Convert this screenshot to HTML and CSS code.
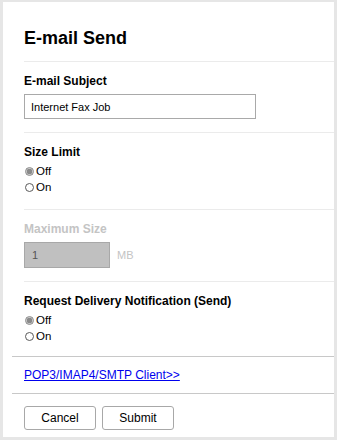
FILE: index.html
```html
<!DOCTYPE html>
<html>
<head>
<meta charset="utf-8">
<link rel="stylesheet" href="styles.css">
</head>
<body>
<div class="panel">
  <h1 class="title">E-mail Send</h1>
  <div class="section">
    <div class="label">E-mail Subject</div>
    <input class="text-input" type="text" value="Internet Fax Job">
  </div>
  <div class="section radios">
    <div class="label">Size Limit</div>
    <label class="radio-row"><span class="radio checked"></span>Off</label>
    <label class="radio-row"><span class="radio"></span>On</label>
  </div>
  <div class="section">
    <div class="label disabled">Maximum Size</div>
    <div class="size-row">
      <input class="size-input" type="text" value="1" disabled>
      <span class="unit">MB</span>
    </div>
  </div>
  <div class="section radios last">
    <div class="label">Request Delivery Notification (Send)</div>
    <label class="radio-row"><span class="radio checked"></span>Off</label>
    <label class="radio-row"><span class="radio"></span>On</label>
  </div>
  <div class="link-section">
    <a class="link" href="#">POP3/IMAP4/SMTP Client&gt;&gt;</a>
  </div>
  <div class="buttons">
    <button class="btn">Cancel</button>
    <button class="btn">Submit</button>
  </div>
</div>
</body>
</html>
```
FILE: styles.css
```css
html, body {
  margin: 0;
  padding: 0;
}
body {
  background: #e6e6e6;
  font-family: "Liberation Sans", Arial, sans-serif;
  color: #000;
  padding: 2px 3px 3px 3px;
}
.panel {
  background: #fff;
  height: 435px;
  box-sizing: border-box;
}
.title {
  margin: 0 0 0 21px;
  padding: 26px 0 12px 0;
  font-size: 18px;
  line-height: 21px;
  font-weight: bold;
  border-bottom: 1px solid #ebebeb;
}
.section {
  margin-left: 21px;
  padding: 12px 0 13px 0;
  border-bottom: 1px solid #ebebeb;
}
.section.radios {
  padding-bottom: 14px;
}
.section.last {
  border-bottom: none;
  padding-bottom: 12px;
}
.label {
  font-size: 12px;
  line-height: 14px;
  font-weight: bold;
}
.label.disabled {
  color: #c4c4c4;
}
.text-input {
  display: block;
  margin: 6px 0 0 0;
  box-sizing: border-box;
  width: 232px;
  height: 25px;
  border: 1px solid #a9a9a9;
  padding: 0 6px;
  font-family: "Liberation Sans", Arial, sans-serif;
  font-size: 11px;
  color: #000;
  outline: none;
}
.radio-row {
  display: flex;
  align-items: center;
  height: 16px;
  font-size: 11.5px;
  gap: 2px;
}
.radio-row:first-of-type {
  margin-top: 4px;
}
.radio {
  display: inline-block;
  box-sizing: border-box;
  width: 9px;
  height: 9px;
  margin-left: 1px;
  border: 1px solid #5a5a5a;
  border-radius: 50%;
  background: #fff;
  margin-top: 1px;
}
.radio.checked {
  border-color: #8a8a8a;
  background: radial-gradient(circle, #8a8a8a 0 2.6px, #d4d4d4 3.1px);
}
.size-row {
  display: flex;
  align-items: center;
  gap: 7px;
  margin-top: 6px;
}
.size-input {
  box-sizing: border-box;
  width: 86px;
  height: 26px;
  border: 1px solid #a8a8a8;
  background: #c0c0c0;
  padding: 0 7px;
  font-family: "Liberation Sans", Arial, sans-serif;
  font-size: 11px;
  color: #555;
  margin: 0;
}
.unit {
  font-size: 11px;
  color: #c4c4c4;
}
.link-section {
  margin-left: 9px;
  padding: 11px 0 11px 12px;
  border-top: 1px solid #c8c8c8;
  border-bottom: 1px solid #c8c8c8;
}
.link {
  display: block;
  font-size: 12px;
  line-height: 14px;
  color: #0000ee;
  text-decoration: underline;
}
.buttons {
  display: flex;
  gap: 6px;
  padding: 12px 0 0 21px;
}
.btn {
  box-sizing: border-box;
  width: 72px;
  height: 24px;
  background: #fff;
  border: 1px solid #a8a8a8;
  border-radius: 3px;
  font-family: "Liberation Sans", Arial, sans-serif;
  font-size: 12px;
  color: #000;
  padding: 0;
}
```
